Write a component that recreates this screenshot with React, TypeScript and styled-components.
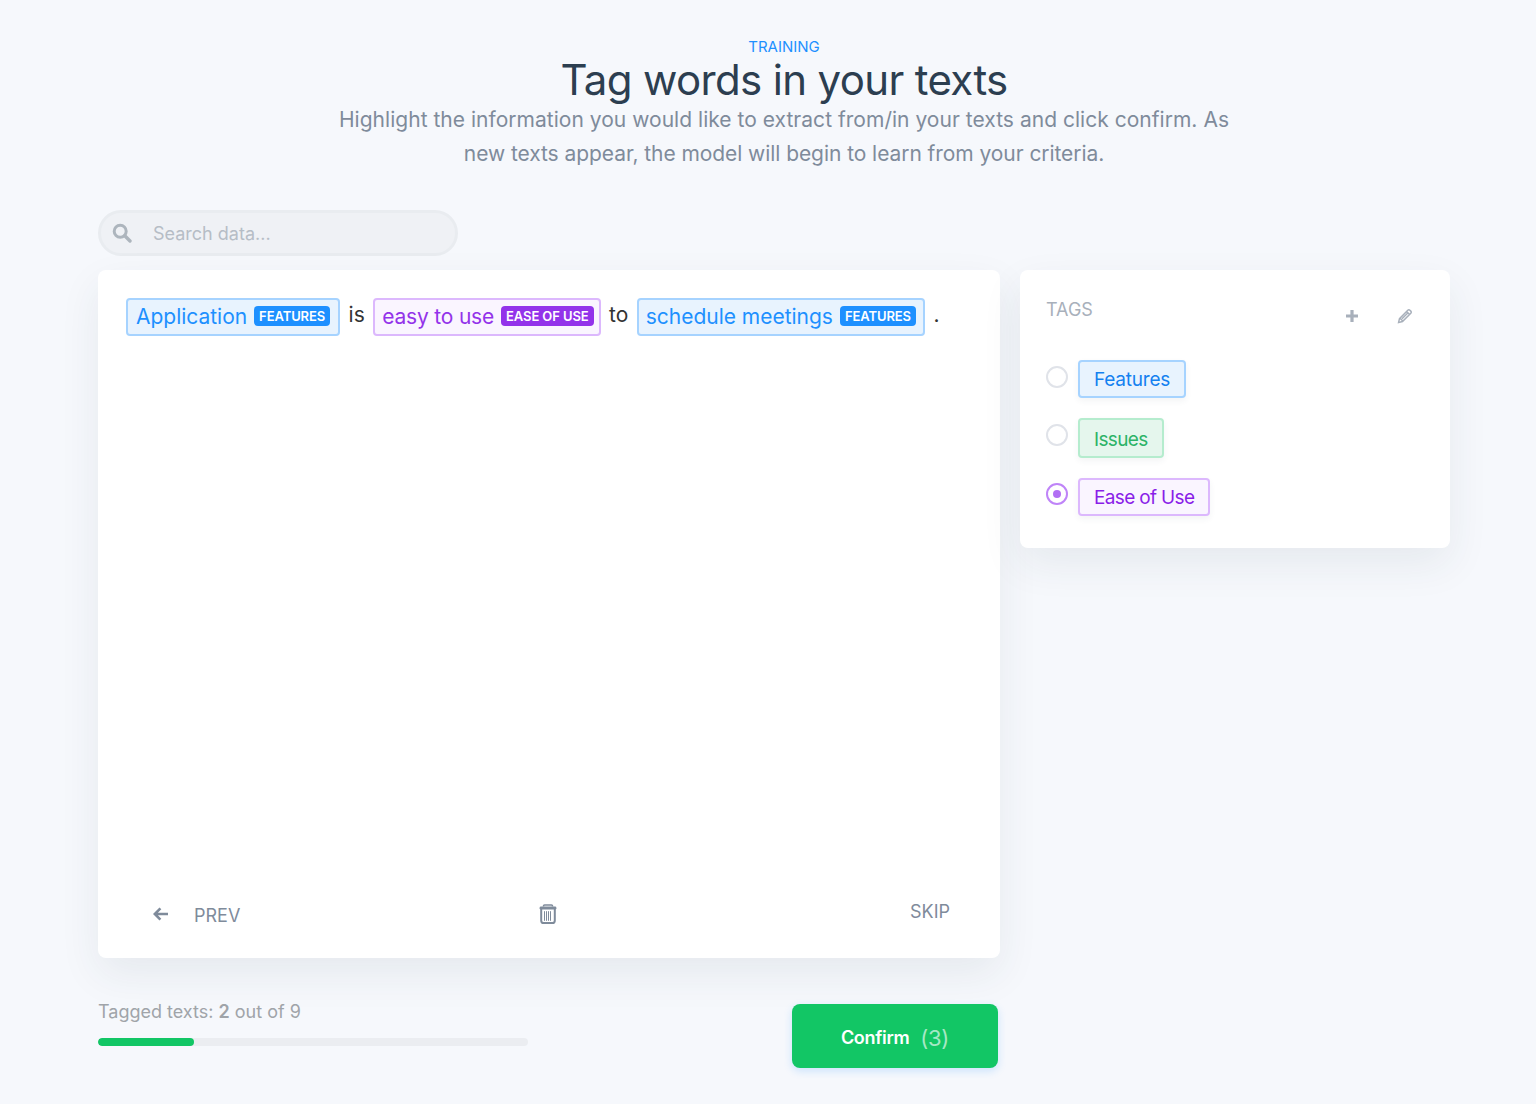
import React from "react";
import styled, { createGlobalStyle } from "styled-components";

const GlobalStyle = createGlobalStyle`
  html, body {
    margin: 0;
    padding: 0;
    background: #f6f8fc;
    font-family: Inter, "Liberation Sans", sans-serif;
  }
  * { box-sizing: border-box; }
`;

type Tone = "blue" | "green" | "purple";

const tones = {
  blue: { bg: "#e8f3fe", border: "#a6d3ff", text: "#1e90ff", chip: "#1e90ff", label: "#1481f0" },
  green: { bg: "#e5f6ed", border: "#b5ecce", text: "#27ae60", chip: "#27ae60", label: "#2cb367" },
  purple: { bg: "#faf5ff", border: "#dcb8fd", text: "#9333ea", chip: "#9333ea", label: "#8a1ee8" },
};

const Trash = () => (
  <svg width="18" height="20" viewBox="0 0 18 20" fill="none">
    <path d="M4.5 2.6V2c0-.6.5-1 1-1h7c.5 0 1 .4 1 1v.6" stroke="#7f8b9b" strokeWidth="1.6" />
    <rect x="0.6" y="2.4" width="16.8" height="3.2" rx="1.4" fill="#7f8b9b" />
    <path d="M2.2 5v11.4c0 1.5 1 2.6 2.4 2.6h8.8c1.4 0 2.4-1.1 2.4-2.6V5" stroke="#7f8b9b" strokeWidth="2" />
    <path d="M5.5 7.2v9.6M7.5 7.2v9.6M9.5 7.2v9.6M11.5 7.2v9.6" stroke="#7f8b9b" strokeWidth="1" />
  </svg>
);

export default function App() {
  return (
    <>
      <GlobalStyle />
      <Page>
        <Header>
          <Eyebrow>TRAINING</Eyebrow>
          <Title>Tag words in your texts</Title>
          <Lead>
            Highlight the information you would like to extract from/in your texts and click confirm. As
            <br />
            <LeadTail>new texts appear, the model will begin to learn from your criteria.</LeadTail>
          </Lead>
        </Header>

        <Content>
          <SearchBox>
            <svg width="20" height="20" viewBox="0 0 20 20" fill="none">
              <circle cx="8.2" cy="8.2" r="6" stroke="#adb5bd" strokeWidth="3" />
              <path d="M12.8 12.8 18 18" stroke="#adb5bd" strokeWidth="3.4" strokeLinecap="round" />
            </svg>
            <SearchText>Search data...</SearchText>
          </SearchBox>

          <Columns>
            <MainCard>
              <Sentence>
                <Mark tone="blue" tracking={-0.02} startPad={8} endPad={8}>
                  Application<Chip tone="blue">FEATURES</Chip>
                </Mark>
                <Word>is</Word>
                <Mark tone="purple" tracking={-0.2} startPad={7} endPad={5}>
                  easy to use<Chip tone="purple">EASE OF USE</Chip>
                </Mark>
                <Word>to</Word>
                <Mark tone="blue" tracking={-0.02} startPad={7} endPad={7}>
                  schedule meetings<Chip tone="blue">FEATURES</Chip>
                </Mark>
                <Word>.</Word>
              </Sentence>

              <CardActions>
                <PrevButton>
                  <svg width="16" height="14" viewBox="0 0 16 14" fill="none">
                    <path d="M15 7H2.5M7.4 1.4 1.8 7l5.6 5.6" stroke="#7f8b9b" strokeWidth="2.6" />
                  </svg>
                  <ActionLabel>PREV</ActionLabel>
                </PrevButton>
                <TrashButton>
                  <Trash />
                </TrashButton>
                <SkipButton>SKIP</SkipButton>
              </CardActions>
            </MainCard>

            <TagsCard>
              <TagsHeader>
                <TagsTitle>TAGS</TagsTitle>
                <TagsTools>
                  <svg width="14" height="14" viewBox="0 0 14 14" fill="none">
                    <path d="M7 1v12M1 7h12" stroke="#a8b0bb" strokeWidth="3.2" />
                  </svg>
                  <svg width="16" height="16" viewBox="0 0 16 16" fill="none">
                    <path
                      d="M1.6 14.4 2.5 10.6 10.8 2.2c.6-.6 1.5-.6 2.1 0l.9.9c.6.6.6 1.5 0 2.1l-8.3 8.3-3.9.9ZM9.6 3.6l2.8 2.8M3 10.2l2.8 2.8M5 10.8l5.8-5.8"
                      stroke="#a8b0bb"
                      strokeWidth="1.5"
                    />
                  </svg>
                </TagsTools>
              </TagsHeader>
              <TagRow>
                <Radio />
                <TagPill tone="blue" tracking={-0.2}>
                  Features
                </TagPill>
              </TagRow>
              <TagRow>
                <Radio />
                <TagPill tone="green" tall tracking={-0.65}>
                  Issues
                </TagPill>
              </TagRow>
              <TagRow>
                <Radio checked />
                <TagPill tone="purple" tracking={-0.65}>
                  Ease of Use
                </TagPill>
              </TagRow>
            </TagsCard>
          </Columns>

          <Footer>
            <Progress>
              <ProgressText>
                Tagged texts: <b>2</b> out of 9
              </ProgressText>
              <Track>
                <Fill style={{ width: `${(2 / 9) * 100}%` }} />
              </Track>
            </Progress>
            <ConfirmButton>
              Confirm <Count>(3)</Count>
            </ConfirmButton>
          </Footer>
        </Content>
      </Page>
    </>
  );
}

const Page = styled.div`
  min-height: 1104px;
  padding-top: 38px;
`;
const Header = styled.header`
  padding-left: 32px;
  text-align: center;
`;
const Eyebrow = styled.div`
  color: #1e90ff;
  font-size: 15px;
  line-height: 18px;
`;
const Title = styled.h1`
  margin: 0;
  color: #2c3e50;
  font-size: 42px;
  line-height: 47px;
  font-weight: 400;
  letter-spacing: -0.65px;
`;
const Lead = styled.p`
  margin: 0;
  color: #7f8b9b;
  font-size: 21px;
  line-height: 34px;
  font-weight: 400;
  letter-spacing: 0.025px;
`;
const LeadTail = styled.span`
  letter-spacing: -0.065px;
`;
const Content = styled.main`
  width: 1352px;
  margin: 39px 0 0 98px;
`;
const SearchBox = styled.div`
  width: 360px;
  height: 46px;
  display: flex;
  align-items: center;
  gap: 21px;
  padding-left: 11px;
  background: #eff1f5;
  border: 3px solid #e9ecf0;
  border-radius: 23px;
`;
const SearchText = styled.span`
  color: #b6bdc6;
  font-size: 18px;
`;
const Columns = styled.div`
  display: flex;
  align-items: flex-start;
  gap: 20px;
  margin-top: 14px;
`;
const MainCard = styled.section`
  width: 902px;
  height: 688px;
  display: flex;
  flex-direction: column;
  justify-content: space-between;
  padding: 28px 28px 34px;
  background: #fff;
  border-radius: 8px;
  box-shadow: 0 16px 40px rgba(44, 62, 80, 0.08);
`;
const Sentence = styled.div`
  display: flex;
  align-items: center;
  gap: 8px;
`;
const Mark = styled.span<{ tone: Tone; tracking: number; startPad: number; endPad: number }>`
  display: inline-flex;
  align-items: center;
  gap: 7px;
  height: 38px;
  padding: 0 ${(p) => p.endPad}px 2px ${(p) => p.startPad}px;
  font-size: 21px;
  color: ${(p) => tones[p.tone].text};
  background: ${(p) => tones[p.tone].bg};
  border: 2px solid ${(p) => tones[p.tone].border};
  border-radius: 4px;
  letter-spacing: ${(p) => p.tracking}px;
  white-space: pre;
`;
const Chip = styled.span<{ tone: Tone }>`
  height: 20px;
  padding: 0 5px;
  font-size: 13px;
  line-height: 20px;
  font-weight: 600;
  letter-spacing: -0.1px;
  color: #fff;
  background: ${(p) => tones[p.tone].chip};
  border-radius: 4px;
`;
const Word = styled.span`
  margin: 0 0.5px;
  color: #333;
  font-size: 21px;
  line-height: 34px;
  padding-bottom: 4px;
`;
const CardActions = styled.div`
  display: flex;
  align-items: center;
  justify-content: space-between;
  padding: 0 22px 0 27px;
`;
const PrevButton = styled.div`
  display: flex;
  align-items: center;
  gap: 25px;
`;
const ActionLabel = styled.span`
  color: #7f8b9b;
  font-size: 18px;
  position: relative;
  top: 2px;
`;
const TrashButton = styled.div`
  display: flex;
  margin-right: 55px;
`;
const SkipButton = styled.span`
  color: #7f8b9b;
  font-size: 18px;
  position: relative;
  top: -2px;
`;
const TagsCard = styled.aside`
  width: 430px;
  height: 278px;
  padding: 30px 26px;
  background: #fff;
  border-radius: 8px;
  box-shadow: 0 16px 40px rgba(44, 62, 80, 0.08);
`;
const TagsHeader = styled.div`
  display: flex;
  justify-content: space-between;
  margin-bottom: 36px;
`;
const TagsTitle = styled.span`
  color: #a8b0bb;
  font-size: 18px;
  line-height: 20px;
`;
const TagsTools = styled.div`
  display: flex;
  align-items: center;
  gap: 38px;
  padding: 8px 11px 0 0;
`;
const TagRow = styled.div`
  display: flex;
  align-items: flex-start;
  gap: 10px;
  margin-bottom: 20px;
`;
const Radio = styled.span<{ checked?: boolean }>`
  width: 22px;
  height: 22px;
  margin-top: ${(p) => (p.checked ? "5px" : "6px")};
  flex: none;
  border-radius: 50%;
  background: #fff;
  border: 2px solid ${(p) => (p.checked ? "#bf84f8" : "#e0e3e9")};
  display: flex;
  align-items: center;
  justify-content: center;
  &::after {
    content: "";
    display: ${(p) => (p.checked ? "block" : "none")};
    width: 8px;
    height: 8px;
    border-radius: 50%;
    background: #b26ff4;
  }
`;
const TagPill = styled.span<{ tone: Tone; tall?: boolean; tracking: number }>`
  display: inline-flex;
  align-items: center;
  height: ${(p) => (p.tall ? "40px" : "38px")};
  padding: ${(p) => (p.tall ? "2px" : "0")} 14px 0;
  color: ${(p) => tones[p.tone].label};
  background: ${(p) => tones[p.tone].bg};
  border: 2px solid ${(p) => tones[p.tone].border};
  border-radius: 4px;
  font-size: 19px;
  letter-spacing: ${(p) => p.tracking}px;
  box-shadow: 0 3px 6px rgba(44, 62, 80, 0.06);
`;
const Footer = styled.div`
  width: 900px;
  display: flex;
  justify-content: space-between;
  align-items: flex-start;
  margin-top: 46px;
`;
const Progress = styled.div`
  width: 430px;
`;
const ProgressText = styled.div`
  color: #a0a4a9;
  font-size: 18px;
  line-height: 22px;
  margin-top: -3px;
  b { font-weight: 600; }
`;
const Track = styled.div`
  height: 8px;
  margin-top: 15px;
  background: #ebedf1;
  border-radius: 4px;
  overflow: hidden;
`;
const Fill = styled.div`
  height: 100%;
  background: #12c665;
  border-radius: 4px;
`;
const ConfirmButton = styled.div`
  width: 206px;
  height: 64px;
  display: flex;
  align-items: center;
  justify-content: center;
  gap: 11px;
  padding-top: 3px;
  background: #12c665;
  color: #fff;
  font-size: 18px;
  font-weight: 600;
  letter-spacing: -0.3px;
  border-radius: 8px;
  box-shadow: 0 3px 8px rgba(30, 144, 255, 0.2);
`;
const Count = styled.span`
  color: #a5e8c4;
  font-weight: 400;
  font-size: 22px;
`;
